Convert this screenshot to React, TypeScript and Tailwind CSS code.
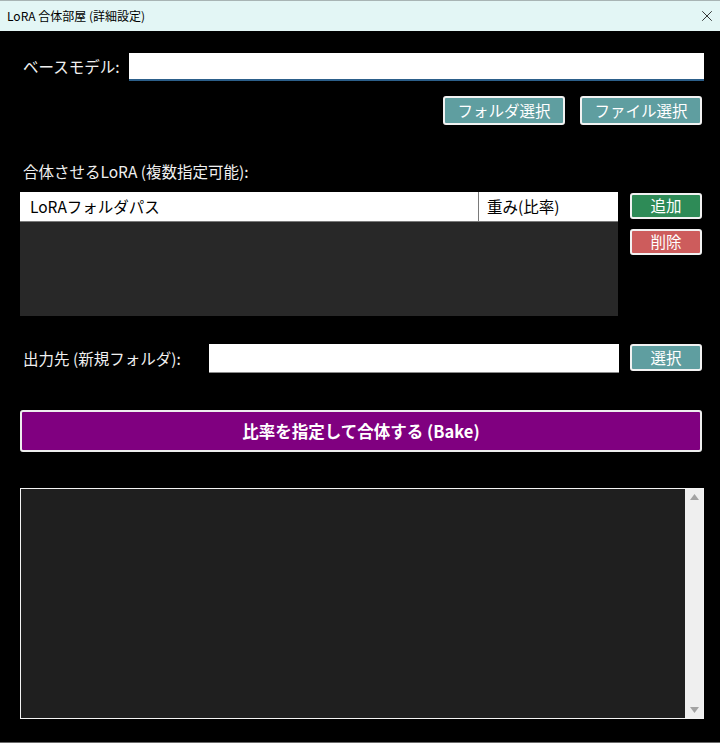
import { X } from "lucide-react";

const font = { fontFamily: '"Noto Sans CJK JP", "Noto Sans", sans-serif' };

function TealButton({ label, className }: { label: string; className: string }) {
  return (
    <button
      className={`flex items-center justify-center rounded-[3px] border-2 border-[#f2f2f2] text-[15.5px] leading-none text-white ${className}`}
    >
      {label}
    </button>
  );
}

export default function App() {
  return (
    <div className="flex h-[743px] w-[720px] flex-col overflow-hidden bg-black" style={font}>
      {/* title bar */}
      <div className="flex h-[31px] shrink-0 items-center justify-between border-t border-[#a8b4b4] bg-[#e3f6f5] pl-[7px] pr-[4px]">
        <span className="text-[12px] text-black">LoRA 合体部屋 (詳細設定)</span>
        <X className="h-[18px] w-[18px] text-[#222]" strokeWidth={1.2} />
      </div>

      <div className="flex flex-1 flex-col pl-[20px] pr-[16px]">
        {/* base model */}
        <div className="mt-[22px] flex h-[28px] items-center">
          <span className="w-[109px] pl-[3px] text-[15.5px] text-[#f0f0f0]">ベースモデル:</span>
          <div className="h-full flex-1 border-b-2 border-[#2c5f8a] bg-white" />
        </div>
        <div className="mt-[15px] flex justify-end gap-[15px] pr-[2px]">
          <TealButton label="フォルダ選択" className="h-[29px] w-[122px] bg-[#5f9ea0]" />
          <TealButton label="ファイル選択" className="h-[29px] w-[122px] bg-[#5f9ea0]" />
        </div>

        {/* lora list */}
        <div className="mt-[36px] pl-[3px] text-[15.5px] leading-[20px] text-[#f0f0f0]">
          合体させるLoRA (複数指定可能):
        </div>
        <div className="mt-[11px] flex gap-[12px]">
          <div className="flex h-[124px] w-[598px] flex-col bg-[#282828]">
            <div className="flex h-[30px] border-b border-[#7a7a7a] bg-white text-[15.5px] text-black">
              <div className="flex w-[459px] items-center border-r border-[#7a7a7a] pl-[10px]">LoRAフォルダパス</div>
              <div className="flex flex-1 items-center pl-[8px]">重み(比率)</div>
            </div>
          </div>
          <div className="flex flex-col gap-[10px] pt-[1px]">
            <TealButton label="追加" className="h-[26px] w-[72px] bg-[#2e8b57]" />
            <TealButton label="削除" className="h-[26px] w-[72px] bg-[#cd5c5c]" />
          </div>
        </div>

        {/* output */}
        <div className="mt-[28px] flex h-[29px] items-center">
          <span className="w-[189px] pl-[3px] text-[15.5px] text-[#f0f0f0]">出力先 (新規フォルダ):</span>
          <div className="h-full w-[410px] border-b border-[#8a8a8a] bg-white" />
          <TealButton label="選択" className="ml-[11px] h-[27px] w-[72px] self-start bg-[#5f9ea0]" />
        </div>

        {/* bake */}
        <button className="mt-[37px] flex h-[42px] w-[682px] items-center justify-center rounded-[3px] border-2 border-[#eeeeee] bg-[#800080] text-[16.5px] font-bold text-white">
          比率を指定して合体する (Bake)
        </button>

        {/* log */}
        <div className="mt-[36px] flex h-[231px] w-[684px] border border-[#f4f4f4] bg-[#1f1f1f]">
          <div className="flex-1" />
          <div className="flex w-[18px] flex-col items-center justify-between bg-[#efefef] py-[5px]">
            <svg width="9" height="6" viewBox="0 0 9 6"><path d="M4.5 0L9 6H0z" fill="#a3a3a3" /></svg>
            <svg width="9" height="6" viewBox="0 0 9 6"><path d="M0 0h9L4.5 6z" fill="#a3a3a3" /></svg>
          </div>
        </div>
      </div>
      <div className="h-[1px] shrink-0 bg-[#6a6a6a]" />
    </div>
  );
}
